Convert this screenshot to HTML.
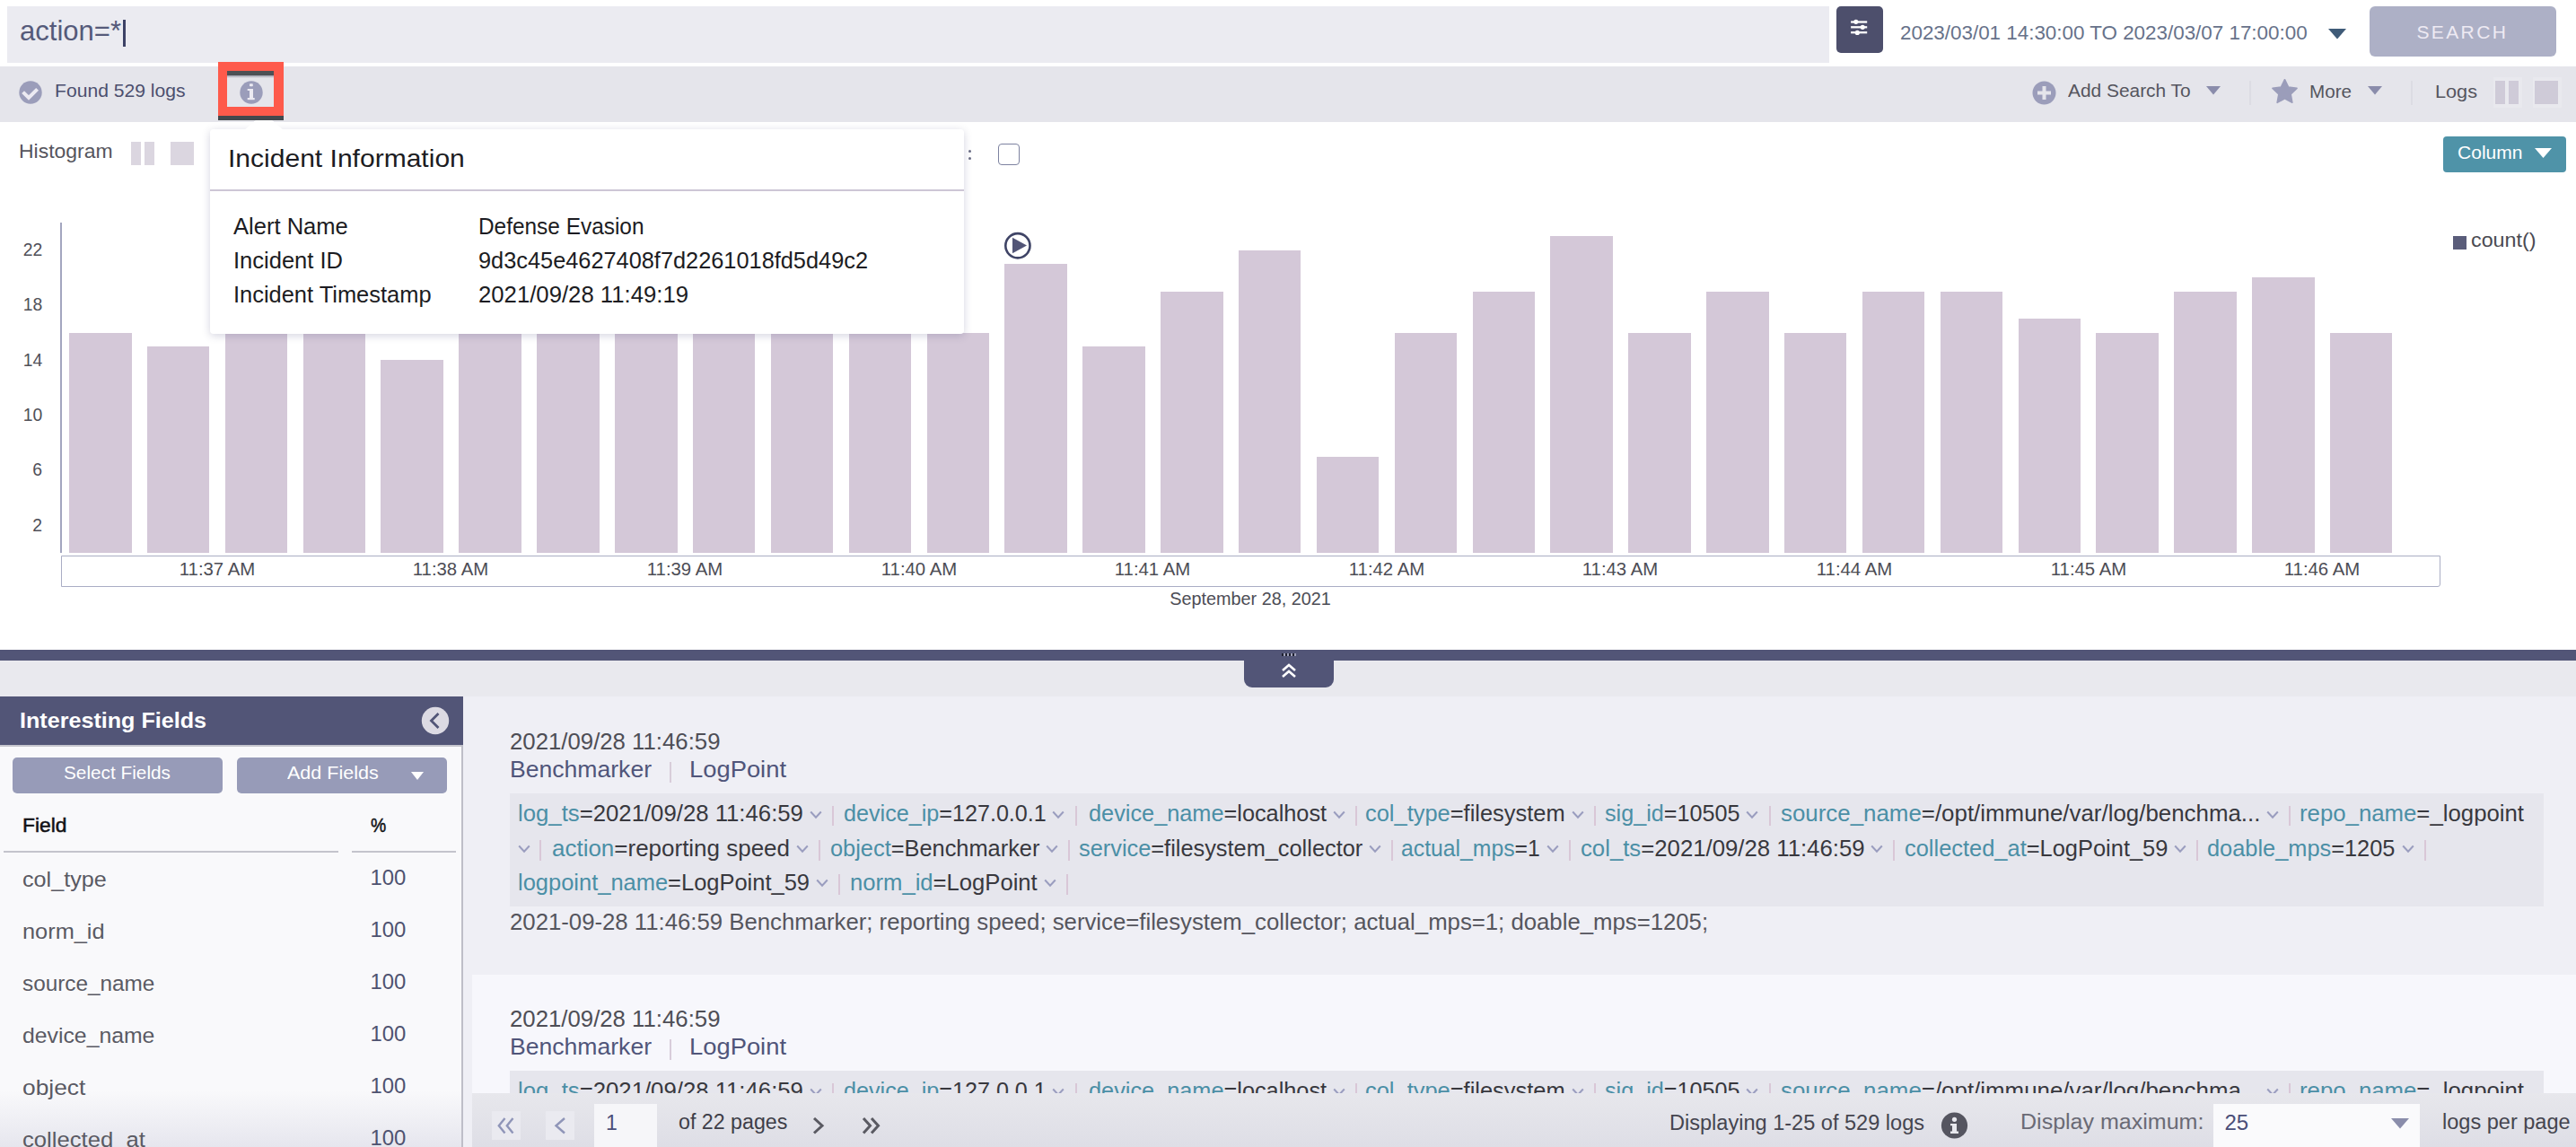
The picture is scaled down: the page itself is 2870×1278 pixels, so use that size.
<!DOCTYPE html>
<html><head><meta charset="utf-8"><title>Search</title>
<style>
html,body{margin:0;padding:0;width:2870px;height:1278px;overflow:hidden;background:#fff;}
body{position:relative;font-family:"Liberation Sans", sans-serif;}
.r{position:absolute;}
.t{position:absolute;white-space:pre;line-height:1;font-family:"Liberation Sans", sans-serif;}
</style></head><body>
<div class="r" style="left:0px;top:0px;width:2870px;height:74px;background:#ffffff;"></div>
<div class="r" style="left:8px;top:7px;width:2030px;height:63px;background:#ebebf1;"></div>
<div class="t " style="left:22.0px;top:18.6px;font-size:30.5px;color:#555a7a;transform:scaleX(1.0174);transform-origin:0 0;">action=*</div>
<div class="r" style="left:137px;top:22px;width:2.5px;height:30px;background:#3d4266;"></div>
<div class="r" style="left:2046px;top:7px;width:52px;height:52px;background:#4d4f6c;border-radius:5px;"></div>
<svg class="r" style="left:2060px;top:19px;" width="24" height="22" viewBox="0 0 24 22"><g stroke="#fff" stroke-width="2.3"><line x1="2.1" y1="5.5" x2="20.2" y2="5.5"/><line x1="2.1" y1="11.3" x2="20.2" y2="11.3"/><line x1="2.1" y1="17.2" x2="20.2" y2="17.2"/></g><circle cx="7.8" cy="5.3" r="2.6" fill="#fff"/><circle cx="15.2" cy="11.3" r="2.6" fill="#fff"/><circle cx="9.3" cy="17.4" r="2.6" fill="#fff"/></svg>
<div class="t " style="left:2116.8px;top:26.5px;font-size:21.5px;color:#67728a;transform:scaleX(1.0414);transform-origin:0 0;">2023/03/01 14:30:00 TO 2023/03/07 17:00:00</div>
<svg class="r" style="left:2594px;top:32px;" width="20" height="12" viewBox="0 0 20 12"><polygon points="0,0 20,0 10,11.5" fill="#3f5b78"/></svg>
<div class="r" style="left:2640px;top:7px;width:208px;height:56px;background:#adb0c6;border-radius:6px;"></div>
<div class="t " style="left:2692.4px;top:25.4px;font-size:21px;color:#eeeaf3;letter-spacing:2.4px;">SEARCH</div>
<div class="r" style="left:0px;top:74px;width:2870px;height:62px;background:#e5e5eb;"></div>
<svg class="r" style="left:21px;top:90px;" width="26" height="26" viewBox="0 0 26 26"><circle cx="13" cy="13" r="12.7" fill="#9b9dba"/><polyline points="4.6,12.6 11,18.9 20.6,9.3" fill="none" stroke="#eceaf2" stroke-width="4"/></svg>
<div class="t " style="left:61.0px;top:90.0px;font-size:21px;color:#4c4f6e;transform:scaleX(1.0057);transform-origin:0 0;">Found 529 logs</div>
<svg class="r" style="left:2264px;top:90px;" width="27" height="27" viewBox="0 0 27 27"><circle cx="13.5" cy="13.5" r="13" fill="#9b9dba"/><rect x="11.5" y="6" width="4" height="15" fill="#e5e5eb"/><rect x="6" y="11.5" width="15" height="4" fill="#e5e5eb"/></svg>
<div class="t " style="left:2304.0px;top:91.0px;font-size:20.5px;color:#55555e;transform:scaleX(1.0188);transform-origin:0 0;">Add Search To</div>
<svg class="r" style="left:2458px;top:96px;" width="16" height="10" viewBox="0 0 16 10"><polygon points="0,0 16,0 8,9.5" fill="#8a8cab"/></svg>
<div class="r" style="left:2506px;top:90px;width:2px;height:27px;background:#dcdce3;"></div>
<svg class="r" style="left:2531px;top:88px;" width="30" height="29" viewBox="0 0 30 29"><polygon points="14.50,0.60 18.61,9.14 28.01,10.41 21.16,16.96 22.85,26.29 14.50,21.80 6.15,26.29 7.84,16.96 0.99,10.41 10.39,9.14" fill="#9b9dba" stroke="#9b9dba" stroke-width="1.6" stroke-linejoin="round"/></svg>
<div class="t " style="left:2573.0px;top:90.6px;font-size:21px;color:#55555e;transform:scaleX(0.9823);transform-origin:0 0;">More</div>
<svg class="r" style="left:2638px;top:96px;" width="16" height="10" viewBox="0 0 16 10"><polygon points="0,0 16,0 8,9.5" fill="#8a8cab"/></svg>
<div class="r" style="left:2686px;top:90px;width:2px;height:27px;background:#dcdce3;"></div>
<div class="t " style="left:2713.3px;top:90.6px;font-size:21px;color:#55555e;transform:scaleX(1.0321);transform-origin:0 0;">Logs</div>
<div class="r" style="left:2778px;top:86px;width:32px;height:34px;background:#e9e9ee;"></div>
<div class="r" style="left:2780px;top:90px;width:11px;height:26px;background:#cfcbd8;"></div>
<div class="r" style="left:2795px;top:90px;width:11px;height:26px;background:#cfcbd8;"></div>
<div class="r" style="left:2822px;top:86px;width:32px;height:34px;background:#e9e9ee;"></div>
<div class="r" style="left:2824px;top:90px;width:26px;height:26px;background:#cfcbd8;"></div>
<div class="r" style="left:0px;top:136px;width:2870px;height:588px;background:#ffffff;"></div>
<div class="t " style="left:21.0px;top:157.1px;font-size:22.8px;color:#55555d;transform:scaleX(1.0068);transform-origin:0 0;">Histogram</div>
<div class="r" style="left:146px;top:158px;width:11px;height:26px;background:#dbd6e0;"></div>
<div class="r" style="left:161px;top:158px;width:11px;height:26px;background:#dbd6e0;"></div>
<div class="r" style="left:190px;top:158px;width:26px;height:26px;background:#dbd6e0;"></div>
<div class="r" style="left:1079px;top:166.5px;width:3px;height:3px;background:#6a6d85;border-radius:2px;"></div>
<div class="r" style="left:1079px;top:175px;width:3px;height:3px;background:#6a6d85;border-radius:2px;"></div>
<div class="r" style="left:1112px;top:160px;width:24px;height:24px;background:#ffffff;border:1.7px solid #7d82a0;border-radius:4px;box-sizing:border-box;"></div>
<div class="r" style="left:2722px;top:152px;width:137px;height:40px;background:#4f93a8;border-radius:4px;"></div>
<div class="t " style="left:2738.0px;top:158.5px;font-size:21px;color:#ffffff;transform:scaleX(1.0019);transform-origin:0 0;">Column</div>
<svg class="r" style="left:2824px;top:165px;" width="19" height="12" viewBox="0 0 19 12"><polygon points="0,0 19,0 9.5,11" fill="#fff"/></svg>
<div class="r" style="left:2733px;top:263px;width:15px;height:15px;background:#5a5d7a;"></div>
<div class="t " style="left:2753.0px;top:256.6px;font-size:22px;color:#4a4a52;transform:scaleX(1.0588);transform-origin:0 0;">count()</div>
<div class="r" style="left:67px;top:248px;width:2px;height:368px;background:#a3a6bf;"></div>
<div class="r" style="left:68px;top:619px;width:2651px;height:35px;background:#ffffff;border:1.6px solid #aaadc4;border-radius:0 0 3px 0;box-sizing:border-box;"></div>
<div class="t " style="right:2822.5px;top:268.0px;font-size:20px;color:#505058;transform:scaleX(0.9665);transform-origin:100% 0;">22</div>
<div class="t " style="right:2822.5px;top:329.3px;font-size:20px;color:#505058;transform:scaleX(0.9665);transform-origin:100% 0;">18</div>
<div class="t " style="right:2822.5px;top:390.6px;font-size:20px;color:#505058;transform:scaleX(0.9665);transform-origin:100% 0;">14</div>
<div class="t " style="right:2822.5px;top:451.9px;font-size:20px;color:#505058;transform:scaleX(0.9665);transform-origin:100% 0;">10</div>
<div class="t " style="right:2822.5px;top:513.2px;font-size:20px;color:#505058;transform:scaleX(0.9665);transform-origin:100% 0;">6</div>
<div class="t " style="right:2822.5px;top:574.5px;font-size:20px;color:#505058;transform:scaleX(0.9665);transform-origin:100% 0;">2</div>
<div class="r" style="left:77.0px;top:370.7px;width:69.5px;height:245.3px;background:#d4c8d8"></div>
<div class="r" style="left:163.9px;top:386.1px;width:69.5px;height:229.9px;background:#d4c8d8"></div>
<div class="r" style="left:250.7px;top:355.4px;width:69.5px;height:260.6px;background:#d4c8d8"></div>
<div class="r" style="left:337.6px;top:355.4px;width:69.5px;height:260.6px;background:#d4c8d8"></div>
<div class="r" style="left:424.4px;top:401.4px;width:69.5px;height:214.6px;background:#d4c8d8"></div>
<div class="r" style="left:511.3px;top:355.4px;width:69.5px;height:260.6px;background:#d4c8d8"></div>
<div class="r" style="left:598.2px;top:355.4px;width:69.5px;height:260.6px;background:#d4c8d8"></div>
<div class="r" style="left:685.0px;top:355.4px;width:69.5px;height:260.6px;background:#d4c8d8"></div>
<div class="r" style="left:771.9px;top:355.4px;width:69.5px;height:260.6px;background:#d4c8d8"></div>
<div class="r" style="left:858.7px;top:355.4px;width:69.5px;height:260.6px;background:#d4c8d8"></div>
<div class="r" style="left:945.6px;top:355.4px;width:69.5px;height:260.6px;background:#d4c8d8"></div>
<div class="r" style="left:1032.5px;top:370.7px;width:69.5px;height:245.3px;background:#d4c8d8"></div>
<div class="r" style="left:1119.3px;top:294.1px;width:69.5px;height:321.9px;background:#d4c8d8"></div>
<div class="r" style="left:1206.2px;top:386.1px;width:69.5px;height:229.9px;background:#d4c8d8"></div>
<div class="r" style="left:1293.0px;top:324.7px;width:69.5px;height:291.3px;background:#d4c8d8"></div>
<div class="r" style="left:1379.9px;top:278.7px;width:69.5px;height:337.3px;background:#d4c8d8"></div>
<div class="r" style="left:1466.8px;top:508.7px;width:69.5px;height:107.3px;background:#d4c8d8"></div>
<div class="r" style="left:1553.6px;top:370.7px;width:69.5px;height:245.3px;background:#d4c8d8"></div>
<div class="r" style="left:1640.5px;top:324.7px;width:69.5px;height:291.3px;background:#d4c8d8"></div>
<div class="r" style="left:1727.3px;top:263.4px;width:69.5px;height:352.6px;background:#d4c8d8"></div>
<div class="r" style="left:1814.2px;top:370.7px;width:69.5px;height:245.3px;background:#d4c8d8"></div>
<div class="r" style="left:1901.1px;top:324.7px;width:69.5px;height:291.3px;background:#d4c8d8"></div>
<div class="r" style="left:1987.9px;top:370.7px;width:69.5px;height:245.3px;background:#d4c8d8"></div>
<div class="r" style="left:2074.8px;top:324.7px;width:69.5px;height:291.3px;background:#d4c8d8"></div>
<div class="r" style="left:2161.6px;top:324.7px;width:69.5px;height:291.3px;background:#d4c8d8"></div>
<div class="r" style="left:2248.5px;top:355.4px;width:69.5px;height:260.6px;background:#d4c8d8"></div>
<div class="r" style="left:2335.4px;top:370.7px;width:69.5px;height:245.3px;background:#d4c8d8"></div>
<div class="r" style="left:2422.2px;top:324.7px;width:69.5px;height:291.3px;background:#d4c8d8"></div>
<div class="r" style="left:2509.1px;top:309.4px;width:69.5px;height:306.6px;background:#d4c8d8"></div>
<div class="r" style="left:2595.9px;top:370.7px;width:69.5px;height:245.3px;background:#d4c8d8"></div>
<div class="t " style="left:-258.2px;width:1000px;text-align:center;top:624.7px;font-size:19.5px;color:#4d4d55;transform:scaleX(1.0425);transform-origin:50% 0;">11:37 AM</div>
<div class="t " style="left:2.4px;width:1000px;text-align:center;top:624.7px;font-size:19.5px;color:#4d4d55;transform:scaleX(1.0425);transform-origin:50% 0;">11:38 AM</div>
<div class="t " style="left:263.0px;width:1000px;text-align:center;top:624.7px;font-size:19.5px;color:#4d4d55;transform:scaleX(1.0425);transform-origin:50% 0;">11:39 AM</div>
<div class="t " style="left:523.6px;width:1000px;text-align:center;top:624.7px;font-size:19.5px;color:#4d4d55;transform:scaleX(1.0425);transform-origin:50% 0;">11:40 AM</div>
<div class="t " style="left:784.2px;width:1000px;text-align:center;top:624.7px;font-size:19.5px;color:#4d4d55;transform:scaleX(1.0425);transform-origin:50% 0;">11:41 AM</div>
<div class="t " style="left:1044.8px;width:1000px;text-align:center;top:624.7px;font-size:19.5px;color:#4d4d55;transform:scaleX(1.0425);transform-origin:50% 0;">11:42 AM</div>
<div class="t " style="left:1305.4px;width:1000px;text-align:center;top:624.7px;font-size:19.5px;color:#4d4d55;transform:scaleX(1.0425);transform-origin:50% 0;">11:43 AM</div>
<div class="t " style="left:1566.0px;width:1000px;text-align:center;top:624.7px;font-size:19.5px;color:#4d4d55;transform:scaleX(1.0425);transform-origin:50% 0;">11:44 AM</div>
<div class="t " style="left:1826.6px;width:1000px;text-align:center;top:624.7px;font-size:19.5px;color:#4d4d55;transform:scaleX(1.0425);transform-origin:50% 0;">11:45 AM</div>
<div class="t " style="left:2087.2px;width:1000px;text-align:center;top:624.7px;font-size:19.5px;color:#4d4d55;transform:scaleX(1.0425);transform-origin:50% 0;">11:46 AM</div>
<div class="t " style="left:892.5px;width:1000px;text-align:center;top:657.2px;font-size:20px;color:#4d4d55;transform:scaleX(0.9904);transform-origin:50% 0;">September 28, 2021</div>
<svg class="r" style="left:1118px;top:258px;" width="32" height="32" viewBox="0 0 32 32"><circle cx="15.9" cy="15.75" r="13.6" fill="#fff" stroke="#3f4466" stroke-width="2.6"/><polygon points="10,6.8 26,15.5 10,24.3" fill="#525577"/></svg>
<div class="r" style="left:234px;top:144px;width:840px;height:228px;background:#fff;border-radius:4px;box-shadow:0 2px 10px rgba(60,60,110,0.22);"></div>
<svg class="r" style="left:272px;top:126px;" width="44" height="20" viewBox="0 0 44 20"><polygon points="0,19 22,0 44,19" fill="#fff"/></svg>
<div class="t " style="left:254.0px;top:162.2px;font-size:28.5px;color:#1c1c22;transform:scaleX(1.0539);transform-origin:0 0;">Incident Information</div>
<div class="r" style="left:234px;top:211px;width:840px;height:2px;background:#cdc6d6;"></div>
<div class="t " style="left:260.0px;top:240.1px;font-size:25px;color:#1c1c22;transform:scaleX(1.0221);transform-origin:0 0;">Alert Name</div>
<div class="t " style="left:532.6px;top:240.1px;font-size:25px;color:#1c1c22;transform:scaleX(0.9762);transform-origin:0 0;">Defense Evasion</div>
<div class="t " style="left:260.0px;top:277.9px;font-size:25px;color:#1c1c22;transform:scaleX(1.0209);transform-origin:0 0;">Incident ID</div>
<div class="t " style="left:532.6px;top:277.9px;font-size:25px;color:#1c1c22;transform:scaleX(1.0135);transform-origin:0 0;">9d3c45e4627408f7d2261018fd5d49c2</div>
<div class="t " style="left:260.0px;top:315.6px;font-size:25px;color:#1c1c22;transform:scaleX(1.0174);transform-origin:0 0;">Incident Timestamp</div>
<div class="t " style="left:532.6px;top:315.6px;font-size:25px;color:#1c1c22;transform:scaleX(1.0285);transform-origin:0 0;">2021/09/28 11:49:19</div>
<div class="r" style="left:243px;top:129px;width:73px;height:5px;background:#44484d;"></div>
<div class="r" style="left:243px;top:69px;width:73px;height:60px;background:#fe5a4b;"></div>
<div class="r" style="left:253px;top:79px;width:52px;height:40px;background:#e5e5eb;"></div>
<div class="r" style="left:253px;top:79px;width:52px;height:5px;background:#4d5155;"></div>
<div class="r" style="left:253px;top:84px;width:52px;height:3px;background:linear-gradient(#9a9ca8,#e5e5eb);"></div>
<svg class="r" style="left:267px;top:90px;" width="26" height="26" viewBox="0 0 26 26"><circle cx="13" cy="13" r="12.7" fill="#9b9dba"/><rect x="11" y="9" width="4" height="12" fill="#eceaf2"/><rect x="8.7" y="9" width="3" height="2" fill="#eceaf2"/><rect x="8.7" y="19" width="8" height="2.2" fill="#eceaf2"/><rect x="11" y="3.2" width="3.8" height="3" rx="0.8" fill="#eceaf2"/></svg>
<div class="r" style="left:0px;top:724px;width:2870px;height:12px;background:#525577;"></div>
<div class="r" style="left:0px;top:736px;width:2870px;height:40px;background:#e9e9ee;"></div>
<div class="r" style="left:1386px;top:724px;width:100px;height:42px;background:#525577;border-radius:0 0 9px 9px;"></div>
<svg class="r" style="left:1427px;top:739px;" width="18" height="17" viewBox="0 0 18 17"><polyline points="2,8 9,2 16,8" fill="none" stroke="#fff" stroke-width="2.6"/><polyline points="2,15 9,9 16,15" fill="none" stroke="#fff" stroke-width="2.6"/></svg>
<div class="r" style="left:1428px;top:728px;width:16px;height:3px;background:repeating-linear-gradient(90deg,#1e2030 0 2px,#9fa1b8 2px 4px);"></div>
<div class="r" style="left:0px;top:776px;width:516px;height:502px;background:#f9f9fb;"></div>
<div class="r" style="left:0;top:1215px;width:514px;height:63px;background:linear-gradient(#f9f9fb,#e6e6ee);"></div>
<div class="r" style="left:514px;top:776px;width:2px;height:502px;background:#bebec8;"></div>
<div class="r" style="left:0px;top:776px;width:516px;height:54px;background:#525577;"></div>
<div class="r" style="left:0px;top:830px;width:514px;height:2px;background:#c6c6ce;"></div>
<div class="t " style="left:22.0px;top:791.2px;font-size:24.5px;color:#ffffff;font-weight:bold;transform:scaleX(1.0254);transform-origin:0 0;">Interesting Fields</div>
<svg class="r" style="left:469px;top:787px;" width="32" height="32" viewBox="0 0 32 32"><circle cx="16" cy="16" r="15.2" fill="#dcdae3"/><polyline points="19.5,8 11.5,16 19.5,24" fill="none" stroke="#525577" stroke-width="2.8"/></svg>
<div class="r" style="left:14px;top:844px;width:234px;height:40px;background:#979bb8;border-radius:5px;"></div>
<div class="t " style="left:71.3px;top:850.6px;font-size:20.5px;color:#ffffff;transform:scaleX(1.0140);transform-origin:0 0;">Select Fields</div>
<div class="r" style="left:264px;top:844px;width:234px;height:40px;background:#979bb8;border-radius:5px;"></div>
<div class="t " style="left:319.7px;top:850.6px;font-size:20.5px;color:#ffffff;transform:scaleX(1.0500);transform-origin:0 0;">Add Fields</div>
<svg class="r" style="left:458px;top:860px;" width="14" height="10" viewBox="0 0 14 10"><polygon points="0,0 14,0 7,9" fill="#fff"/></svg>
<div class="t " style="left:25.0px;top:909.0px;font-size:22px;color:#111115;-webkit-text-stroke:0.5px #111115;transform:scaleX(1.0360);transform-origin:0 0;">Field</div>
<div class="t " style="left:412.6px;top:909.0px;font-size:22px;color:#111115;-webkit-text-stroke:0.5px #111115;transform:scaleX(0.8793);transform-origin:0 0;">%</div>
<div class="r" style="left:4px;top:948px;width:373px;height:2px;background:#c4c4cc;"></div>
<div class="r" style="left:392px;top:948px;width:116px;height:2px;background:#c4c4cc;"></div>
<div class="t " style="left:24.5px;top:967.7px;font-size:24.5px;color:#5a5a63;transform:scaleX(1.0268);transform-origin:0 0;">col_type</div>
<div class="t " style="right:2417.2px;top:966.5px;font-size:23px;color:#4e5270;transform:scaleX(1.0371);transform-origin:100% 0;">100</div>
<div class="t " style="left:24.5px;top:1025.7px;font-size:24.5px;color:#5a5a63;transform:scaleX(1.0349);transform-origin:0 0;">norm_id</div>
<div class="t " style="right:2417.2px;top:1024.5px;font-size:23px;color:#4e5270;transform:scaleX(1.0371);transform-origin:100% 0;">100</div>
<div class="t " style="left:24.5px;top:1083.7px;font-size:24.5px;color:#5a5a63;transform:scaleX(0.9929);transform-origin:0 0;">source_name</div>
<div class="t " style="right:2417.2px;top:1082.5px;font-size:23px;color:#4e5270;transform:scaleX(1.0371);transform-origin:100% 0;">100</div>
<div class="t " style="left:24.5px;top:1141.7px;font-size:24.5px;color:#5a5a63;transform:scaleX(1.0114);transform-origin:0 0;">device_name</div>
<div class="t " style="right:2417.2px;top:1140.5px;font-size:23px;color:#4e5270;transform:scaleX(1.0371);transform-origin:100% 0;">100</div>
<div class="t " style="left:24.5px;top:1199.7px;font-size:24.5px;color:#5a5a63;transform:scaleX(1.0753);transform-origin:0 0;">object</div>
<div class="t " style="right:2417.2px;top:1198.5px;font-size:23px;color:#4e5270;transform:scaleX(1.0371);transform-origin:100% 0;">100</div>
<div class="t " style="left:24.5px;top:1257.7px;font-size:24.5px;color:#5a5a63;transform:scaleX(1.0462);transform-origin:0 0;">collected_at</div>
<div class="t " style="right:2417.2px;top:1256.5px;font-size:23px;color:#4e5270;transform:scaleX(1.0371);transform-origin:100% 0;">100</div>
<div class="r" style="left:516px;top:776px;width:2354px;height:502px;background:#efeff5;"></div>
<div class="t " style="left:568.3px;top:813.5px;font-size:25px;color:#4e4e56;transform:scaleX(1.0306);transform-origin:0 0;">2021/09/28 11:46:59</div>
<div class="t " style="left:568.0px;top:844.1px;font-size:26.5px;color:#50557a;transform:scaleX(1.0026);transform-origin:0 0;">Benchmarker</div>
<div class="r" style="left:746px;top:849px;width:2px;height:23px;background:#d8cdda;"></div>
<div class="t " style="left:767.7px;top:844.1px;font-size:26.5px;color:#50557a;transform:scaleX(1.0324);transform-origin:0 0;">LogPoint</div>
<div class="r" style="left:568px;top:884px;width:2266px;height:126px;background:#e6e6ed;"></div>
<div class="t" style="left:577.2px;top:894.4px;font-size:25.5px;transform:scaleX(1.0092);transform-origin:0 0;"><span style="color:#4b8fa6">log_ts</span><span style="color:#38383e">=2021/09/28 11:46:59</span></div>
<svg class="r" style="left:901.9px;top:902.8px;" width="14" height="10" viewBox="0 0 14 10"><polyline points="1.2,1.5 7,7.8 12.8,1.5" fill="none" stroke="#9a9dbf" stroke-width="2"/></svg>
<div class="r" style="left:927.1px;top:897.7px;width:2px;height:22.7px;background:#d9c7d7;"></div>
<div class="t" style="left:939.8px;top:894.4px;font-size:25.5px;transform:scaleX(0.9861);transform-origin:0 0;"><span style="color:#4b8fa6">device_ip</span><span style="color:#38383e">=127.0.0.1</span></div>
<svg class="r" style="left:1172.4px;top:902.8px;" width="14" height="10" viewBox="0 0 14 10"><polyline points="1.2,1.5 7,7.8 12.8,1.5" fill="none" stroke="#9a9dbf" stroke-width="2"/></svg>
<div class="r" style="left:1197.6px;top:897.7px;width:2px;height:22.7px;background:#d9c7d7;"></div>
<div class="t" style="left:1212.6px;top:894.4px;font-size:25.5px;transform:scaleX(0.9921);transform-origin:0 0;"><span style="color:#4b8fa6">device_name</span><span style="color:#38383e">=localhost</span></div>
<svg class="r" style="left:1484.5px;top:902.8px;" width="14" height="10" viewBox="0 0 14 10"><polyline points="1.2,1.5 7,7.8 12.8,1.5" fill="none" stroke="#9a9dbf" stroke-width="2"/></svg>
<div class="r" style="left:1509.7px;top:897.7px;width:2px;height:22.7px;background:#d9c7d7;"></div>
<div class="t" style="left:1521.3px;top:894.4px;font-size:25.5px;transform:scaleX(0.9972);transform-origin:0 0;"><span style="color:#4b8fa6">col_type</span><span style="color:#38383e">=filesystem</span></div>
<svg class="r" style="left:1750.7px;top:902.8px;" width="14" height="10" viewBox="0 0 14 10"><polyline points="1.2,1.5 7,7.8 12.8,1.5" fill="none" stroke="#9a9dbf" stroke-width="2"/></svg>
<div class="r" style="left:1775.9px;top:897.7px;width:2px;height:22.7px;background:#d9c7d7;"></div>
<div class="t" style="left:1788.1px;top:894.4px;font-size:25.5px;transform:scaleX(0.9874);transform-origin:0 0;"><span style="color:#4b8fa6">sig_id</span><span style="color:#38383e">=10505</span></div>
<svg class="r" style="left:1945.4px;top:902.8px;" width="14" height="10" viewBox="0 0 14 10"><polyline points="1.2,1.5 7,7.8 12.8,1.5" fill="none" stroke="#9a9dbf" stroke-width="2"/></svg>
<div class="r" style="left:1970.6px;top:897.7px;width:2px;height:22.7px;background:#d9c7d7;"></div>
<div class="t" style="left:1984px;top:894.4px;font-size:25.5px;transform:scaleX(1.0149);transform-origin:0 0;"><span style="color:#4b8fa6">source_name</span><span style="color:#38383e">=/opt/immune/var/log/benchma...</span></div>
<svg class="r" style="left:2525.2px;top:902.8px;" width="14" height="10" viewBox="0 0 14 10"><polyline points="1.2,1.5 7,7.8 12.8,1.5" fill="none" stroke="#9a9dbf" stroke-width="2"/></svg>
<div class="r" style="left:2550.4px;top:897.7px;width:2px;height:22.7px;background:#d9c7d7;"></div>
<div class="t" style="left:2562px;top:894.4px;font-size:25.5px;transform:scaleX(1.0105);transform-origin:0 0;"><span style="color:#4b8fa6">repo_name</span><span style="color:#38383e">=_logpoint</span></div>
<div class="t" style="left:615px;top:932.7px;font-size:25.5px;transform:scaleX(1.0187);transform-origin:0 0;"><span style="color:#4b8fa6">action</span><span style="color:#38383e">=reporting speed</span></div>
<svg class="r" style="left:886.8px;top:941.1px;" width="14" height="10" viewBox="0 0 14 10"><polyline points="1.2,1.5 7,7.8 12.8,1.5" fill="none" stroke="#9a9dbf" stroke-width="2"/></svg>
<div class="r" style="left:912px;top:936.0px;width:2px;height:22.7px;background:#d9c7d7;"></div>
<div class="t" style="left:924.6px;top:932.7px;font-size:25.5px;transform:scaleX(0.9950);transform-origin:0 0;"><span style="color:#4b8fa6">object</span><span style="color:#38383e">=Benchmarker</span></div>
<svg class="r" style="left:1164.8px;top:941.1px;" width="14" height="10" viewBox="0 0 14 10"><polyline points="1.2,1.5 7,7.8 12.8,1.5" fill="none" stroke="#9a9dbf" stroke-width="2"/></svg>
<div class="r" style="left:1190px;top:936.0px;width:2px;height:22.7px;background:#d9c7d7;"></div>
<div class="t" style="left:1201.8px;top:932.7px;font-size:25.5px;transform:scaleX(0.9939);transform-origin:0 0;"><span style="color:#4b8fa6">service</span><span style="color:#38383e">=filesystem_collector</span></div>
<svg class="r" style="left:1524.8px;top:941.1px;" width="14" height="10" viewBox="0 0 14 10"><polyline points="1.2,1.5 7,7.8 12.8,1.5" fill="none" stroke="#9a9dbf" stroke-width="2"/></svg>
<div class="r" style="left:1550px;top:936.0px;width:2px;height:22.7px;background:#d9c7d7;"></div>
<div class="t" style="left:1561.3px;top:932.7px;font-size:25.5px;transform:scaleX(0.9701);transform-origin:0 0;"><span style="color:#4b8fa6">actual_mps</span><span style="color:#38383e">=1</span></div>
<svg class="r" style="left:1722.8px;top:941.1px;" width="14" height="10" viewBox="0 0 14 10"><polyline points="1.2,1.5 7,7.8 12.8,1.5" fill="none" stroke="#9a9dbf" stroke-width="2"/></svg>
<div class="r" style="left:1748px;top:936.0px;width:2px;height:22.7px;background:#d9c7d7;"></div>
<div class="t" style="left:1760.8px;top:932.7px;font-size:25.5px;transform:scaleX(1.0093);transform-origin:0 0;"><span style="color:#4b8fa6">col_ts</span><span style="color:#38383e">=2021/09/28 11:46:59</span></div>
<svg class="r" style="left:2084.1px;top:941.1px;" width="14" height="10" viewBox="0 0 14 10"><polyline points="1.2,1.5 7,7.8 12.8,1.5" fill="none" stroke="#9a9dbf" stroke-width="2"/></svg>
<div class="r" style="left:2109.3px;top:936.0px;width:2px;height:22.7px;background:#d9c7d7;"></div>
<div class="t" style="left:2122px;top:932.7px;font-size:25.5px;transform:scaleX(0.9973);transform-origin:0 0;"><span style="color:#4b8fa6">collected_at</span><span style="color:#38383e">=LogPoint_59</span></div>
<svg class="r" style="left:2422.2px;top:941.1px;" width="14" height="10" viewBox="0 0 14 10"><polyline points="1.2,1.5 7,7.8 12.8,1.5" fill="none" stroke="#9a9dbf" stroke-width="2"/></svg>
<div class="r" style="left:2447.4px;top:936.0px;width:2px;height:22.7px;background:#d9c7d7;"></div>
<div class="t" style="left:2459.3px;top:932.7px;font-size:25.5px;transform:scaleX(0.9945);transform-origin:0 0;"><span style="color:#4b8fa6">doable_mps</span><span style="color:#38383e">=1205</span></div>
<svg class="r" style="left:2675.5px;top:941.1px;" width="14" height="10" viewBox="0 0 14 10"><polyline points="1.2,1.5 7,7.8 12.8,1.5" fill="none" stroke="#9a9dbf" stroke-width="2"/></svg>
<div class="r" style="left:2700.7px;top:936.0px;width:2px;height:22.7px;background:#d9c7d7;"></div>
<div class="t" style="left:577px;top:971.0px;font-size:25.5px;transform:scaleX(0.9988);transform-origin:0 0;"><span style="color:#4b8fa6">logpoint_name</span><span style="color:#38383e">=LogPoint_59</span></div>
<svg class="r" style="left:908.8px;top:979.4px;" width="14" height="10" viewBox="0 0 14 10"><polyline points="1.2,1.5 7,7.8 12.8,1.5" fill="none" stroke="#9a9dbf" stroke-width="2"/></svg>
<div class="r" style="left:934px;top:974.3px;width:2px;height:22.7px;background:#d9c7d7;"></div>
<div class="t" style="left:947.3px;top:971.0px;font-size:25.5px;transform:scaleX(1.0049);transform-origin:0 0;"><span style="color:#4b8fa6">norm_id</span><span style="color:#38383e">=LogPoint</span></div>
<svg class="r" style="left:1162.8px;top:979.4px;" width="14" height="10" viewBox="0 0 14 10"><polyline points="1.2,1.5 7,7.8 12.8,1.5" fill="none" stroke="#9a9dbf" stroke-width="2"/></svg>
<div class="r" style="left:1188px;top:974.3px;width:2px;height:22.7px;background:#d9c7d7;"></div>
<svg class="r" style="left:577px;top:941.1px;" width="14" height="10" viewBox="0 0 14 10"><polyline points="1.2,1.5 7,7.8 12.8,1.5" fill="none" stroke="#9a9dbf" stroke-width="2"/></svg>
<div class="r" style="left:601px;top:936.0px;width:2px;height:22.7px;background:#d9c7d7;"></div>
<div class="t " style="left:568.0px;top:1014.9px;font-size:25.5px;color:#55555d;transform:scaleX(1.0093);transform-origin:0 0;">2021-09-28 11:46:59 Benchmarker; reporting speed; service=filesystem_collector; actual_mps=1; doable_mps=1205;</div>
<div class="r" style="left:526px;top:1086px;width:2344px;height:192px;background:#f7f7fc;"></div>
<div class="t " style="left:568.3px;top:1122.5px;font-size:25px;color:#4e4e56;transform:scaleX(1.0306);transform-origin:0 0;">2021/09/28 11:46:59</div>
<div class="t " style="left:568.0px;top:1153.1px;font-size:26.5px;color:#50557a;transform:scaleX(1.0026);transform-origin:0 0;">Benchmarker</div>
<div class="r" style="left:746px;top:1158px;width:2px;height:23px;background:#d8cdda;"></div>
<div class="t " style="left:767.7px;top:1153.1px;font-size:26.5px;color:#50557a;transform:scaleX(1.0324);transform-origin:0 0;">LogPoint</div>
<div class="r" style="left:568px;top:1193px;width:2266px;height:126px;background:#e6e6ed;"></div>
<div class="t" style="left:577.2px;top:1203.4px;font-size:25.5px;transform:scaleX(1.0092);transform-origin:0 0;"><span style="color:#4b8fa6">log_ts</span><span style="color:#38383e">=2021/09/28 11:46:59</span></div>
<svg class="r" style="left:901.9px;top:1211.8px;" width="14" height="10" viewBox="0 0 14 10"><polyline points="1.2,1.5 7,7.8 12.8,1.5" fill="none" stroke="#9a9dbf" stroke-width="2"/></svg>
<div class="r" style="left:927.1px;top:1206.7px;width:2px;height:22.7px;background:#d9c7d7;"></div>
<div class="t" style="left:939.8px;top:1203.4px;font-size:25.5px;transform:scaleX(0.9861);transform-origin:0 0;"><span style="color:#4b8fa6">device_ip</span><span style="color:#38383e">=127.0.0.1</span></div>
<svg class="r" style="left:1172.4px;top:1211.8px;" width="14" height="10" viewBox="0 0 14 10"><polyline points="1.2,1.5 7,7.8 12.8,1.5" fill="none" stroke="#9a9dbf" stroke-width="2"/></svg>
<div class="r" style="left:1197.6px;top:1206.7px;width:2px;height:22.7px;background:#d9c7d7;"></div>
<div class="t" style="left:1212.6px;top:1203.4px;font-size:25.5px;transform:scaleX(0.9921);transform-origin:0 0;"><span style="color:#4b8fa6">device_name</span><span style="color:#38383e">=localhost</span></div>
<svg class="r" style="left:1484.5px;top:1211.8px;" width="14" height="10" viewBox="0 0 14 10"><polyline points="1.2,1.5 7,7.8 12.8,1.5" fill="none" stroke="#9a9dbf" stroke-width="2"/></svg>
<div class="r" style="left:1509.7px;top:1206.7px;width:2px;height:22.7px;background:#d9c7d7;"></div>
<div class="t" style="left:1521.3px;top:1203.4px;font-size:25.5px;transform:scaleX(0.9972);transform-origin:0 0;"><span style="color:#4b8fa6">col_type</span><span style="color:#38383e">=filesystem</span></div>
<svg class="r" style="left:1750.7px;top:1211.8px;" width="14" height="10" viewBox="0 0 14 10"><polyline points="1.2,1.5 7,7.8 12.8,1.5" fill="none" stroke="#9a9dbf" stroke-width="2"/></svg>
<div class="r" style="left:1775.9px;top:1206.7px;width:2px;height:22.7px;background:#d9c7d7;"></div>
<div class="t" style="left:1788.1px;top:1203.4px;font-size:25.5px;transform:scaleX(0.9874);transform-origin:0 0;"><span style="color:#4b8fa6">sig_id</span><span style="color:#38383e">=10505</span></div>
<svg class="r" style="left:1945.4px;top:1211.8px;" width="14" height="10" viewBox="0 0 14 10"><polyline points="1.2,1.5 7,7.8 12.8,1.5" fill="none" stroke="#9a9dbf" stroke-width="2"/></svg>
<div class="r" style="left:1970.6px;top:1206.7px;width:2px;height:22.7px;background:#d9c7d7;"></div>
<div class="t" style="left:1984px;top:1203.4px;font-size:25.5px;transform:scaleX(1.0149);transform-origin:0 0;"><span style="color:#4b8fa6">source_name</span><span style="color:#38383e">=/opt/immune/var/log/benchma...</span></div>
<svg class="r" style="left:2525.2px;top:1211.8px;" width="14" height="10" viewBox="0 0 14 10"><polyline points="1.2,1.5 7,7.8 12.8,1.5" fill="none" stroke="#9a9dbf" stroke-width="2"/></svg>
<div class="r" style="left:2550.4px;top:1206.7px;width:2px;height:22.7px;background:#d9c7d7;"></div>
<div class="t" style="left:2562px;top:1203.4px;font-size:25.5px;transform:scaleX(1.0105);transform-origin:0 0;"><span style="color:#4b8fa6">repo_name</span><span style="color:#38383e">=_logpoint</span></div>
<div class="t" style="left:615px;top:1241.7px;font-size:25.5px;transform:scaleX(1.0187);transform-origin:0 0;"><span style="color:#4b8fa6">action</span><span style="color:#38383e">=reporting speed</span></div>
<svg class="r" style="left:886.8px;top:1250.1px;" width="14" height="10" viewBox="0 0 14 10"><polyline points="1.2,1.5 7,7.8 12.8,1.5" fill="none" stroke="#9a9dbf" stroke-width="2"/></svg>
<div class="r" style="left:912px;top:1245.0px;width:2px;height:22.7px;background:#d9c7d7;"></div>
<div class="t" style="left:924.6px;top:1241.7px;font-size:25.5px;transform:scaleX(0.9950);transform-origin:0 0;"><span style="color:#4b8fa6">object</span><span style="color:#38383e">=Benchmarker</span></div>
<svg class="r" style="left:1164.8px;top:1250.1px;" width="14" height="10" viewBox="0 0 14 10"><polyline points="1.2,1.5 7,7.8 12.8,1.5" fill="none" stroke="#9a9dbf" stroke-width="2"/></svg>
<div class="r" style="left:1190px;top:1245.0px;width:2px;height:22.7px;background:#d9c7d7;"></div>
<div class="t" style="left:1201.8px;top:1241.7px;font-size:25.5px;transform:scaleX(0.9939);transform-origin:0 0;"><span style="color:#4b8fa6">service</span><span style="color:#38383e">=filesystem_collector</span></div>
<svg class="r" style="left:1524.8px;top:1250.1px;" width="14" height="10" viewBox="0 0 14 10"><polyline points="1.2,1.5 7,7.8 12.8,1.5" fill="none" stroke="#9a9dbf" stroke-width="2"/></svg>
<div class="r" style="left:1550px;top:1245.0px;width:2px;height:22.7px;background:#d9c7d7;"></div>
<div class="t" style="left:1561.3px;top:1241.7px;font-size:25.5px;transform:scaleX(0.9701);transform-origin:0 0;"><span style="color:#4b8fa6">actual_mps</span><span style="color:#38383e">=1</span></div>
<svg class="r" style="left:1722.8px;top:1250.1px;" width="14" height="10" viewBox="0 0 14 10"><polyline points="1.2,1.5 7,7.8 12.8,1.5" fill="none" stroke="#9a9dbf" stroke-width="2"/></svg>
<div class="r" style="left:1748px;top:1245.0px;width:2px;height:22.7px;background:#d9c7d7;"></div>
<div class="t" style="left:1760.8px;top:1241.7px;font-size:25.5px;transform:scaleX(1.0093);transform-origin:0 0;"><span style="color:#4b8fa6">col_ts</span><span style="color:#38383e">=2021/09/28 11:46:59</span></div>
<svg class="r" style="left:2084.1px;top:1250.1px;" width="14" height="10" viewBox="0 0 14 10"><polyline points="1.2,1.5 7,7.8 12.8,1.5" fill="none" stroke="#9a9dbf" stroke-width="2"/></svg>
<div class="r" style="left:2109.3px;top:1245.0px;width:2px;height:22.7px;background:#d9c7d7;"></div>
<div class="t" style="left:2122px;top:1241.7px;font-size:25.5px;transform:scaleX(0.9973);transform-origin:0 0;"><span style="color:#4b8fa6">collected_at</span><span style="color:#38383e">=LogPoint_59</span></div>
<svg class="r" style="left:2422.2px;top:1250.1px;" width="14" height="10" viewBox="0 0 14 10"><polyline points="1.2,1.5 7,7.8 12.8,1.5" fill="none" stroke="#9a9dbf" stroke-width="2"/></svg>
<div class="r" style="left:2447.4px;top:1245.0px;width:2px;height:22.7px;background:#d9c7d7;"></div>
<div class="t" style="left:2459.3px;top:1241.7px;font-size:25.5px;transform:scaleX(0.9945);transform-origin:0 0;"><span style="color:#4b8fa6">doable_mps</span><span style="color:#38383e">=1205</span></div>
<svg class="r" style="left:2675.5px;top:1250.1px;" width="14" height="10" viewBox="0 0 14 10"><polyline points="1.2,1.5 7,7.8 12.8,1.5" fill="none" stroke="#9a9dbf" stroke-width="2"/></svg>
<div class="r" style="left:2700.7px;top:1245.0px;width:2px;height:22.7px;background:#d9c7d7;"></div>
<div class="t" style="left:577px;top:1280.0px;font-size:25.5px;transform:scaleX(0.9988);transform-origin:0 0;"><span style="color:#4b8fa6">logpoint_name</span><span style="color:#38383e">=LogPoint_59</span></div>
<svg class="r" style="left:908.8px;top:1288.4px;" width="14" height="10" viewBox="0 0 14 10"><polyline points="1.2,1.5 7,7.8 12.8,1.5" fill="none" stroke="#9a9dbf" stroke-width="2"/></svg>
<div class="r" style="left:934px;top:1283.3px;width:2px;height:22.7px;background:#d9c7d7;"></div>
<div class="t" style="left:947.3px;top:1280.0px;font-size:25.5px;transform:scaleX(1.0049);transform-origin:0 0;"><span style="color:#4b8fa6">norm_id</span><span style="color:#38383e">=LogPoint</span></div>
<svg class="r" style="left:1162.8px;top:1288.4px;" width="14" height="10" viewBox="0 0 14 10"><polyline points="1.2,1.5 7,7.8 12.8,1.5" fill="none" stroke="#9a9dbf" stroke-width="2"/></svg>
<div class="r" style="left:1188px;top:1283.3px;width:2px;height:22.7px;background:#d9c7d7;"></div>
<svg class="r" style="left:577px;top:1250.1px;" width="14" height="10" viewBox="0 0 14 10"><polyline points="1.2,1.5 7,7.8 12.8,1.5" fill="none" stroke="#9a9dbf" stroke-width="2"/></svg>
<div class="r" style="left:601px;top:1245.0px;width:2px;height:22.7px;background:#d9c7d7;"></div>
<div class="t " style="left:568.0px;top:1323.9px;font-size:25.5px;color:#55555d;transform:scaleX(1.0093);transform-origin:0 0;">2021-09-28 11:46:59 Benchmarker; reporting speed; service=filesystem_collector; actual_mps=1; doable_mps=1205;</div>
<div class="r" style="left:526px;top:1218px;width:2344px;height:60px;background:linear-gradient(#e7e7ec,#dedee6);"></div>
<div class="r" style="left:548px;top:1238px;width:32px;height:32px;background:#eaeaf0;"></div>
<svg class="r" style="left:554px;top:1245px;" width="20" height="19" viewBox="0 0 20 19"><polyline points="8.5,1 1.8,9.25 8.5,17.5" fill="none" stroke="#8f95b8" stroke-width="2.4"/><polyline points="17.5,1 10.8,9.25 17.5,17.5" fill="none" stroke="#8f95b8" stroke-width="2.4"/></svg>
<div class="r" style="left:608px;top:1238px;width:32px;height:32px;background:#eaeaf0;"></div>
<svg class="r" style="left:617px;top:1245px;" width="14" height="19" viewBox="0 0 14 19"><polyline points="12,1 2.5,9.25 12,17.5" fill="none" stroke="#8f95b8" stroke-width="2.4"/></svg>
<div class="r" style="left:662px;top:1230px;width:70px;height:48px;background:#f6f6f9;"></div>
<div class="t " style="left:675.0px;top:1240.2px;font-size:23px;color:#4a4e78;">1</div>
<div class="t " style="left:756.0px;top:1239.0px;font-size:23px;color:#3e3e48;transform:scaleX(1.0091);transform-origin:0 0;">of 22 pages</div>
<svg class="r" style="left:905px;top:1245px;" width="14" height="19" viewBox="0 0 14 19"><polyline points="2,1 11,9.25 2,17.5" fill="none" stroke="#5a5a62" stroke-width="3"/></svg>
<svg class="r" style="left:960px;top:1245px;" width="22" height="19" viewBox="0 0 22 19"><polyline points="2,1 9.5,9.25 2,17.5" fill="none" stroke="#5a5a62" stroke-width="3"/><polyline points="11,1 18.5,9.25 11,17.5" fill="none" stroke="#5a5a62" stroke-width="3"/></svg>
<div class="t " style="left:1860.0px;top:1239.5px;font-size:23px;color:#45454f;transform:scaleX(1.0236);transform-origin:0 0;">Displaying 1-25 of 529 logs</div>
<svg class="r" style="left:2162px;top:1239px;" width="31" height="30" viewBox="0 0 31 30"><circle cx="15.5" cy="15" r="14.6" fill="#555560"/><rect x="13" y="13" width="5" height="10" fill="#e8e8ee"/><rect x="11" y="21.5" width="9" height="2.5" fill="#e8e8ee"/><rect x="11" y="13" width="4" height="2.2" fill="#e8e8ee"/><circle cx="15.5" cy="8.3" r="2.6" fill="#e8e8ee"/></svg>
<div class="t " style="left:2250.8px;top:1239.0px;font-size:23.5px;color:#6a6a75;transform:scaleX(1.0649);transform-origin:0 0;">Display maximum:</div>
<div class="r" style="left:2466px;top:1230px;width:230px;height:48px;background:#fafafc;"></div>
<div class="t " style="left:2478.4px;top:1238.6px;font-size:24px;color:#4a4e78;">25</div>
<svg class="r" style="left:2664px;top:1246px;" width="20" height="12" viewBox="0 0 20 12"><polygon points="0,0 20,0 10,11.5" fill="#8a8dab"/></svg>
<div class="t " style="left:2721.0px;top:1239.2px;font-size:23px;color:#45454f;transform:scaleX(1.0231);transform-origin:0 0;">logs per page</div>
</body></html>
